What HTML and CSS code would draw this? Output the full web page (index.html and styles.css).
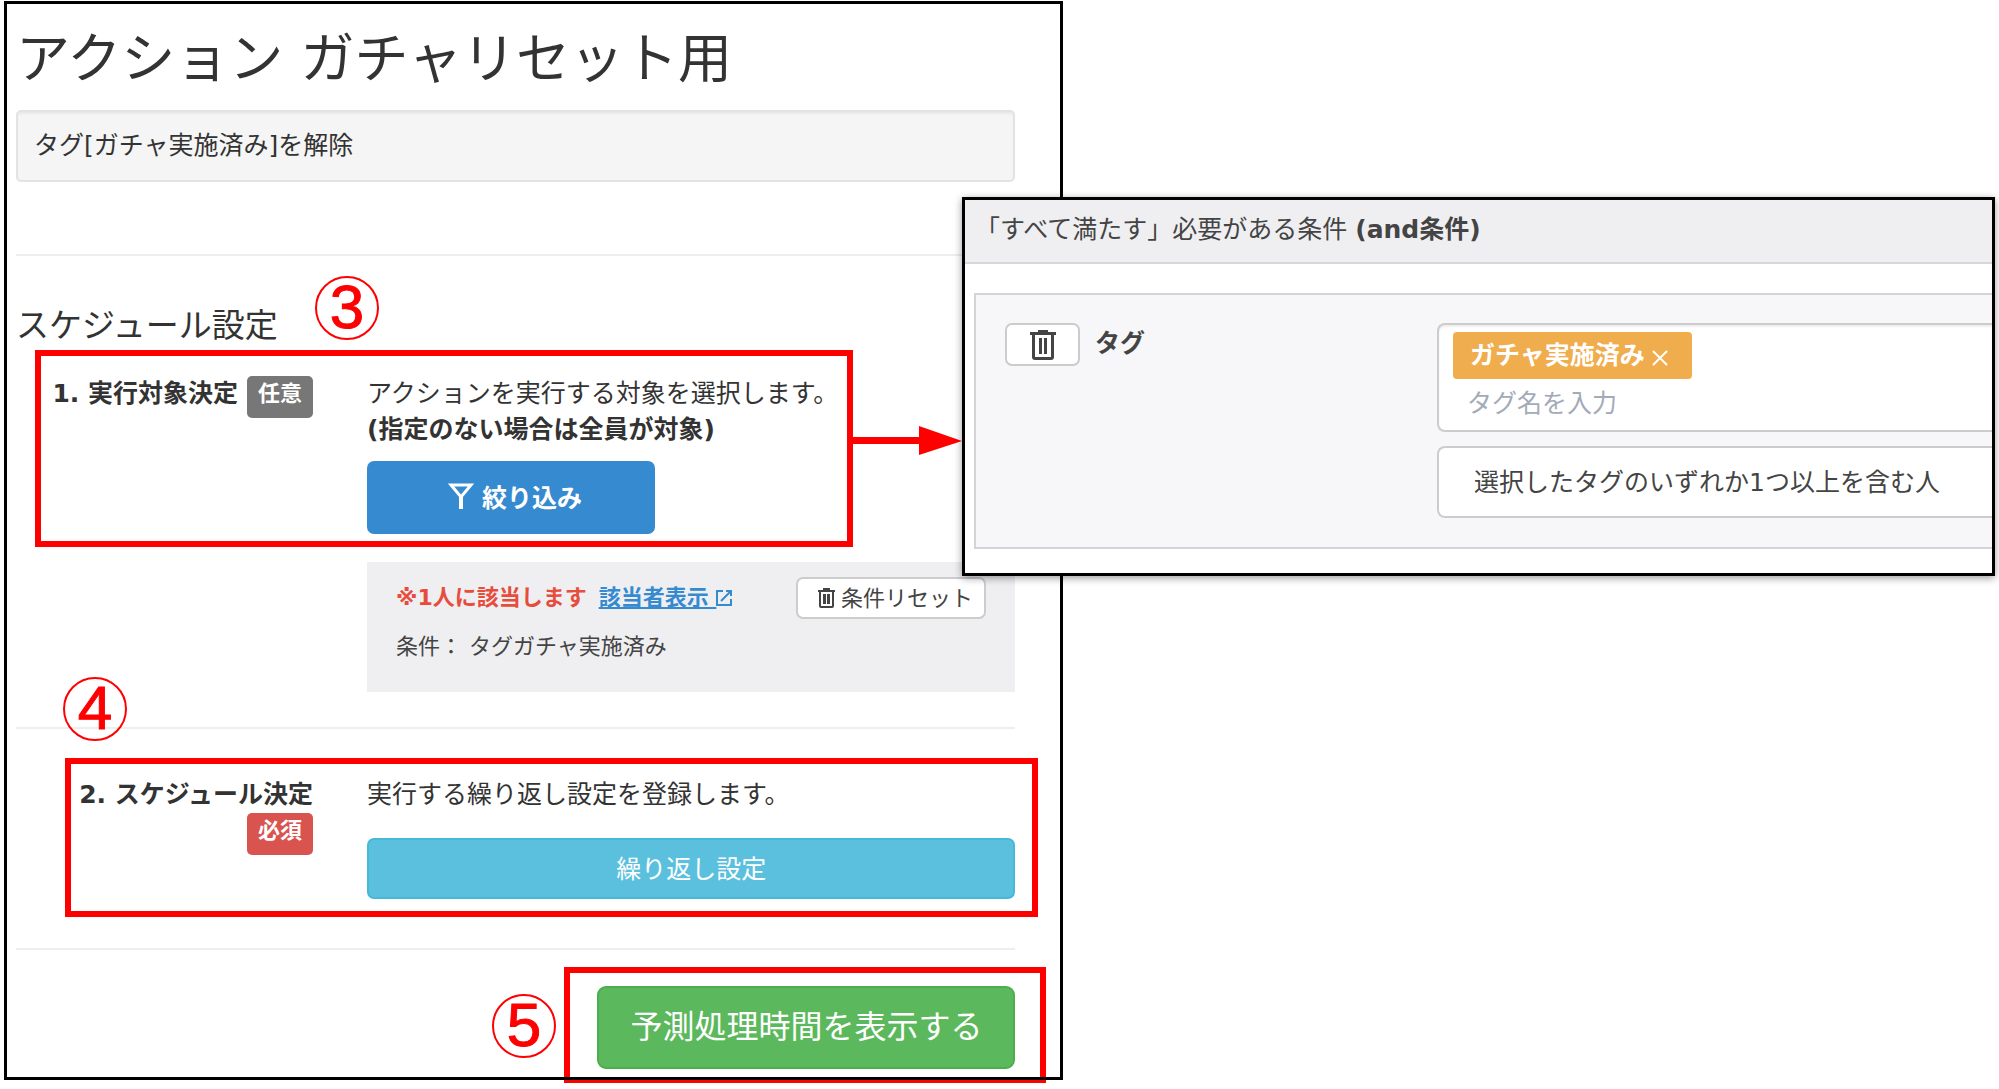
FILE: index.html
```html
<!DOCTYPE html>
<html lang="ja">
<head>
  <meta charset="UTF-8">
  <meta name="viewport" content="width=device-width, initial-scale=1.0">
  <title>アクション ガチャリセット用</title>
  <link rel="stylesheet" href="styles.css">
</head>
<body>
  <main class="panel">
    <h1>アクション ガチャリセット用</h1>
    <div class="well">タグ[ガチャ実施済み]を解除</div>
    <hr class="hr-top">

    <h2>スケジュール設定</h2>
    <section class="row">
      <div class="row-label">
        <span>1. 実行対象決定</span>
        <span class="badge">任意</span>
      </div>
      <div class="row-body">
        <p>アクションを実行する対象を選択します。<br><strong>(指定のない場合は全員が対象)</strong></p>
        <button type="button" class="btn btn-filter">
          <svg class="icon-filter" viewBox="0 0 26 26" aria-hidden="true"><path d="M3 2H23L13 14Z" fill="none" stroke="#fff" stroke-width="3"/><path d="M13 13V26" stroke="#fff" stroke-width="4"/></svg>
          絞り込み
        </button>
        <div class="result">
          <div class="result-head">
            <strong class="hit">※1人に該当します</strong>
            <a class="hit-link" href="#">該当者表示&nbsp;</a>
            <svg class="icon-open" viewBox="0 0 16 16" aria-hidden="true"><path d="M7 1H1V15H15V9M10 1H15V6M15 1L5 11" fill="none" stroke="#368ad0" stroke-width="2"/></svg>
            <button type="button" class="btn btn-reset">
              <svg class="icon-trash-small" viewBox="0 0 17 20" aria-hidden="true"><path d="M5 0H12V2H17V4H16V18Q16 20 14 20H3Q1 20 1 18V4H0V2H5ZM3 4V18H14V4ZM5 6H8V16H5ZM9 6H12V16H9Z" fill="#444" fill-rule="evenodd"/></svg>条件リセット
            </button>
          </div>
          <p class="result-text">条件： タグガチャ実施済み</p>
        </div>
      </div>
    </section>
    <hr class="hr-middle">

    <section class="row">
      <div class="row-label">
        <span>2. スケジュール決定</span>
        <span class="badge badge-required">必須</span>
      </div>
      <div class="row-body">
        <p>実行する繰り返し設定を登録します。</p>
        <button type="button" class="btn btn-repeat">繰り返し設定</button>
      </div>
    </section>
    <hr class="hr-bottom">

    <div class="actions">
      <button type="button" class="btn btn-submit">予測処理時間を表示する</button>
    </div>

    <!-- step markers -->
    <div class="frame frame-3"></div>
    <div class="frame frame-4"></div>
    <div class="frame frame-5"></div>
    <span class="step step-3">3</span>
    <span class="step step-4">4</span>
    <span class="step step-5">5</span>
  </main>

  <svg class="arrow" viewBox="0 0 110 30" aria-hidden="true"><path d="M0 11H67V0L110 15L67 29V18H0Z" fill="#f00"/></svg>

  <aside class="popup">
    <div class="popup-head">「すべて満たす」必要がある条件 <strong>(and条件)</strong></div>
    <div class="condition">
      <div class="condition-label">
        <button type="button" class="btn btn-delete" aria-label="削除">
          <svg class="icon-trash" viewBox="0 0 26 30" aria-hidden="true"><path d="M8 0H18V2H26V5H24V27Q24 30 21 30H5Q2 30 2 27V5H0V2H8ZM5 5V27H21V5ZM9 8H12V24H9ZM14 8H17V24H14Z" fill="#444" fill-rule="evenodd"/></svg>
        </button>
        <label for="tagName">タグ</label>
      </div>
      <div class="condition-fields">
        <div class="tag-box">
          <span class="tag">ガチャ実施済み<button type="button" class="tag-remove" aria-label="タグを外す"><svg viewBox="0 0 16 16" aria-hidden="true"><path d="M1 1L15 15M15 1L1 15" stroke="#fff" stroke-width="2"/></svg></button></span>
          <input type="text" id="tagName" name="tagName" placeholder="タグ名を入力">
        </div>
        <select name="tagMatch" aria-label="タグの条件">
          <option>選択したタグのいずれか1つ以上を含む人</option>
        </select>
      </div>
    </div>
  </aside>
</body>
</html>
```
FILE: styles.css
```css
* {
  box-sizing: border-box;
}
body {
  position: relative;
  margin: 0;
  padding: 1px 4px 4px;
  background-color: #fff;
  color: #333;
  font-family: "DejaVu Sans", "Noto Sans CJK JP", sans-serif;
  font-size: 25px;
  line-height: 36px;
}
h1, h2, p {
  margin: 0;
  font-weight: 400;
}
hr {
  margin: 0;
  border: 0;
  border-top: 2px solid #eee;
}
button, input, select {
  font-family: inherit;
  font-size: 25px;
}

.panel {
  width: 53vw;
  padding: 26px 45px 8px 9px;
  border: 3px solid #000;
}
h1 {
  margin-bottom: 20px;
  font-size: 54px;
  line-height: 60px;
}
.well {
  padding: 16px;
  border: 2px solid #e3e3e3;
  border-radius: 5px;
  background-color: #f5f5f5;
  box-shadow: inset 0 2px 2px rgba(0, 0, 0, 0.05);
}
.hr-top {
  margin: 72px 0 50px;
}
h2 {
  margin-bottom: 30px;
  font-size: 33px;
  line-height: 40px;
}
.hr-middle {
  margin: 35px 0 48px;
}
.hr-bottom {
  margin: 49px 0 36px;
}

.row {
  display: grid;
  grid-template-columns: 297px 1fr;
  gap: 54px;
}
.row-label {
  display: flex;
  flex-wrap: wrap;
  justify-content: flex-end;
  align-content: flex-start;
  align-items: flex-start;
  column-gap: 9px;
  font-weight: 700;
}
.row-label span {
  height: 36px;
}
.row-label .badge {
  height: 42px;
  padding: 0 11px;
  border-radius: 5px;
  background-color: #777;
  color: #fff;
  font-size: 22px;
}
.row-label .badge-required {
  background-color: #d9534f;
}

.btn {
  display: flex;
  align-items: center;
  justify-content: center;
  padding: 0 0 4px;
  border: 2px solid #ccc;
  border-radius: 7px;
  background-color: #fff;
  color: #444;
  cursor: pointer;
}
.btn-filter {
  gap: 8px;
  width: 288px;
  height: 73px;
  margin: 13px 0 28px;
  padding-left: 8px;
  border: 0;
  background-color: #368ad0;
  color: #fff;
  font-weight: 700;
}
.btn-repeat {
  width: 100%;
  height: 61px;
  margin-top: 25px;
  border-color: #46b8da;
  background-color: #5bc0de;
  color: #fff;
}
.actions {
  display: flex;
  justify-content: flex-end;
}
.btn-submit {
  height: 83px;
  padding: 0 31px 8px;
  border-color: #4cae4c;
  border-radius: 9px;
  background-color: #5cb85c;
  color: #fff;
  font-size: 32px;
}

.result {
  height: 130px;
  padding: 15px 29px;
  background-color: #efeff2;
  font-size: 22px;
}
.result-head {
  display: flex;
  align-items: center;
  margin-bottom: 10px;
}
.hit {
  margin-right: 12px;
  color: #e74c3c;
}
.hit-link {
  color: #368ad0;
  font-weight: 700;
}
.btn-reset {
  width: 190px;
  height: 42px;
  margin-left: auto;
  padding-left: 8px;
  gap: 6px;
  font-size: 22px;
}
.result-text {
  color: #444;
}

.icon-filter {
  width: 26px;
  height: 26px;
}
.icon-open {
  width: 16px;
  height: 16px;
}
.icon-trash {
  width: 26px;
  height: 30px;
}
.icon-trash-small {
  width: 17px;
  height: 20px;
  margin-top: 4px;
}

.popup {
  position: absolute;
  top: 197px;
  right: 4px;
  left: 962px;
  padding-bottom: 24px;
  border: 3px solid #000;
  background-color: #fff;
  box-shadow: 0 2px 8px rgba(0, 0, 0, 0.4);
  color: #444;
}
.popup-head {
  padding: 12px 10px 14px;
  border-bottom: 2px solid #d8d8dc;
  background-color: #efeff2;
}
.condition {
  display: grid;
  grid-template-columns: 432px 1fr;
  margin: 29px 0 0 9px;
  padding: 28px 0 29px 29px;
  border: 2px solid #d3d3d8;
  border-right: 0;
  background-color: #f7f7fa;
}
.condition-label {
  display: flex;
  align-items: flex-start;
  gap: 15px;
  font-weight: 700;
}
.condition-label label {
  padding-top: 3px;
}
.btn-delete {
  width: 75px;
  height: 43px;
  padding: 0;
}
.condition-fields {
  display: flex;
  flex-direction: column;
  gap: 14px;
}
.tag-box {
  display: flex;
  flex-direction: column;
  align-items: flex-start;
  height: 109px;
  padding: 7px 14px;
  border: 2px solid #ccc;
  border-right: 0;
  border-radius: 8px 0 0 8px;
  background-color: #fff;
  box-shadow: inset 0 2px 2px rgba(0, 0, 0, 0.07);
}
.tag {
  display: flex;
  align-items: center;
  height: 48px;
  padding: 0 24px 0 17px;
  border-radius: 4px;
  background-color: #f0ad4e;
  color: #fff;
  font-weight: 700;
}
.tag-remove {
  display: flex;
  margin-left: 7px;
  padding: 4px 0 0;
  border: 0;
  background: none;
}
.tag-remove svg {
  width: 16px;
  height: 16px;
}
.tag-box input {
  width: 100%;
  height: 44px;
  padding: 5px 14px 0;
  border: 0;
  background: none;
  color: #444;
}
.tag-box input::placeholder {
  color: #a3aab8;
}
select {
  width: 100%;
  height: 72px;
  padding: 0 35px;
  border: 2px solid #ccc;
  border-right: 0;
  border-radius: 8px 0 0 8px;
  background-color: #fff;
  color: #444;
  appearance: none;
}

/* red markers laid over the panels */
.frame {
  position: absolute;
  border: 6px solid #f00;
}
.frame-3 {
  top: 350px;
  left: 35px;
  width: 818px;
  height: 197px;
  pointer-events: none;
}
.frame-4 {
  top: 758px;
  left: 65px;
  width: 973px;
  height: 159px;
  pointer-events: none;
}
.frame-5 {
  z-index: -1;
  top: 967px;
  left: 564px;
  width: 482px;
  height: 116px;
}
.step {
  position: absolute;
  width: 64px;
  height: 64px;
  border: 2px solid #f00;
  border-radius: 50%;
  color: #f00;
  font-family: "Liberation Sans", sans-serif;
  font-size: 62px;
  line-height: 58px;
  text-align: center;
  -webkit-text-stroke: 1px #f00;
}
.step-3 {
  top: 276px;
  left: 315px;
}
.step-4 {
  top: 677px;
  left: 63px;
}
.step-5 {
  top: 994px;
  left: 492px;
}
.arrow {
  position: absolute;
  top: 426px;
  left: 852px;
  width: 110px;
  height: 30px;
}
```
